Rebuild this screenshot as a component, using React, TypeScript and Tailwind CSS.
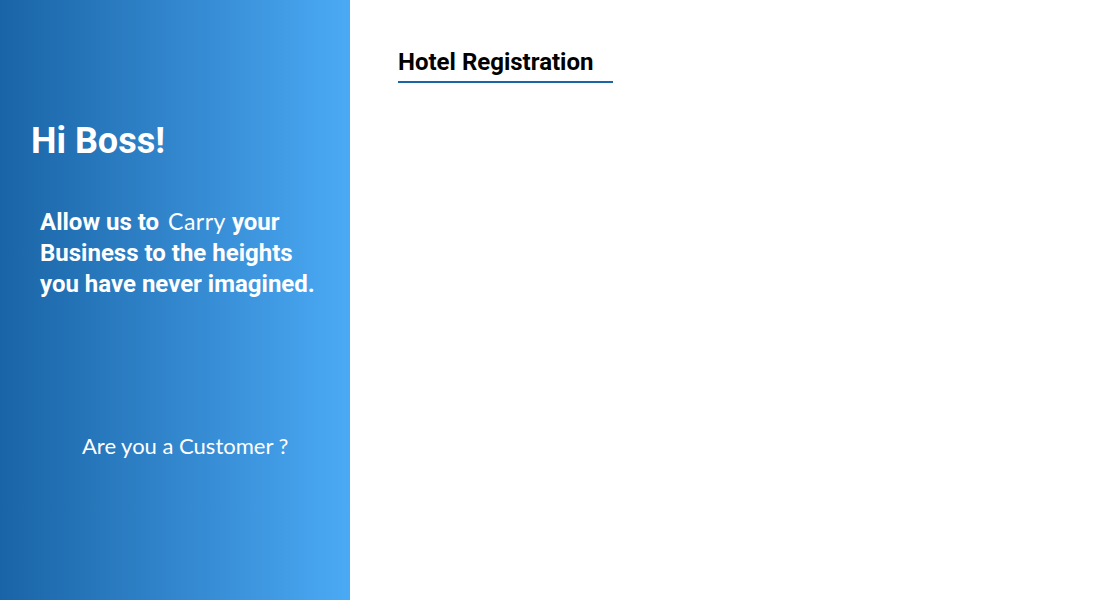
import React from "react";

export default function App() {
  return (
    <div className="flex h-[600px] w-[1100px] bg-white" style={{ fontFamily: "Roboto, 'Liberation Sans', sans-serif" }}>
      <div className="flex h-full w-[350px] shrink-0 flex-col bg-gradient-to-r from-[#1964a6] to-[#4baaf5] text-white">
        <h1 className="mt-[120px] pl-[31px] text-[36px] font-bold leading-[42px]">Hi Boss!</h1>
        <p className="mt-[44px] pl-[40px] pr-[10px] text-[24px] font-bold leading-[31px] whitespace-nowrap">
          Allow us to{" "}
          <span className="ml-[3px] text-[23px] font-normal tracking-[0.5px]" style={{ fontFamily: "Lato, 'Open Sans', sans-serif" }}>
            Carry
          </span>{" "}
          your
          <br />
          Business to the heights
          <br />
          you have never imagined.
        </p>
        <div
          className="mt-[132px] pl-[82px] text-[22px] leading-[28px] whitespace-nowrap"
          style={{ fontFamily: "Lato, 'Open Sans', sans-serif" }}
        >
          Are you a Customer ?
        </div>
      </div>
      <div className="flex-1 pl-[48px] pt-[46px]">
        <div className="inline-block border-b-2 border-[#1a67a8] pb-[3px] pr-[20px]">
          <h2 className="text-[24px] font-bold leading-[32px] text-black">Hotel Registration</h2>
        </div>
      </div>
    </div>
  );
}
